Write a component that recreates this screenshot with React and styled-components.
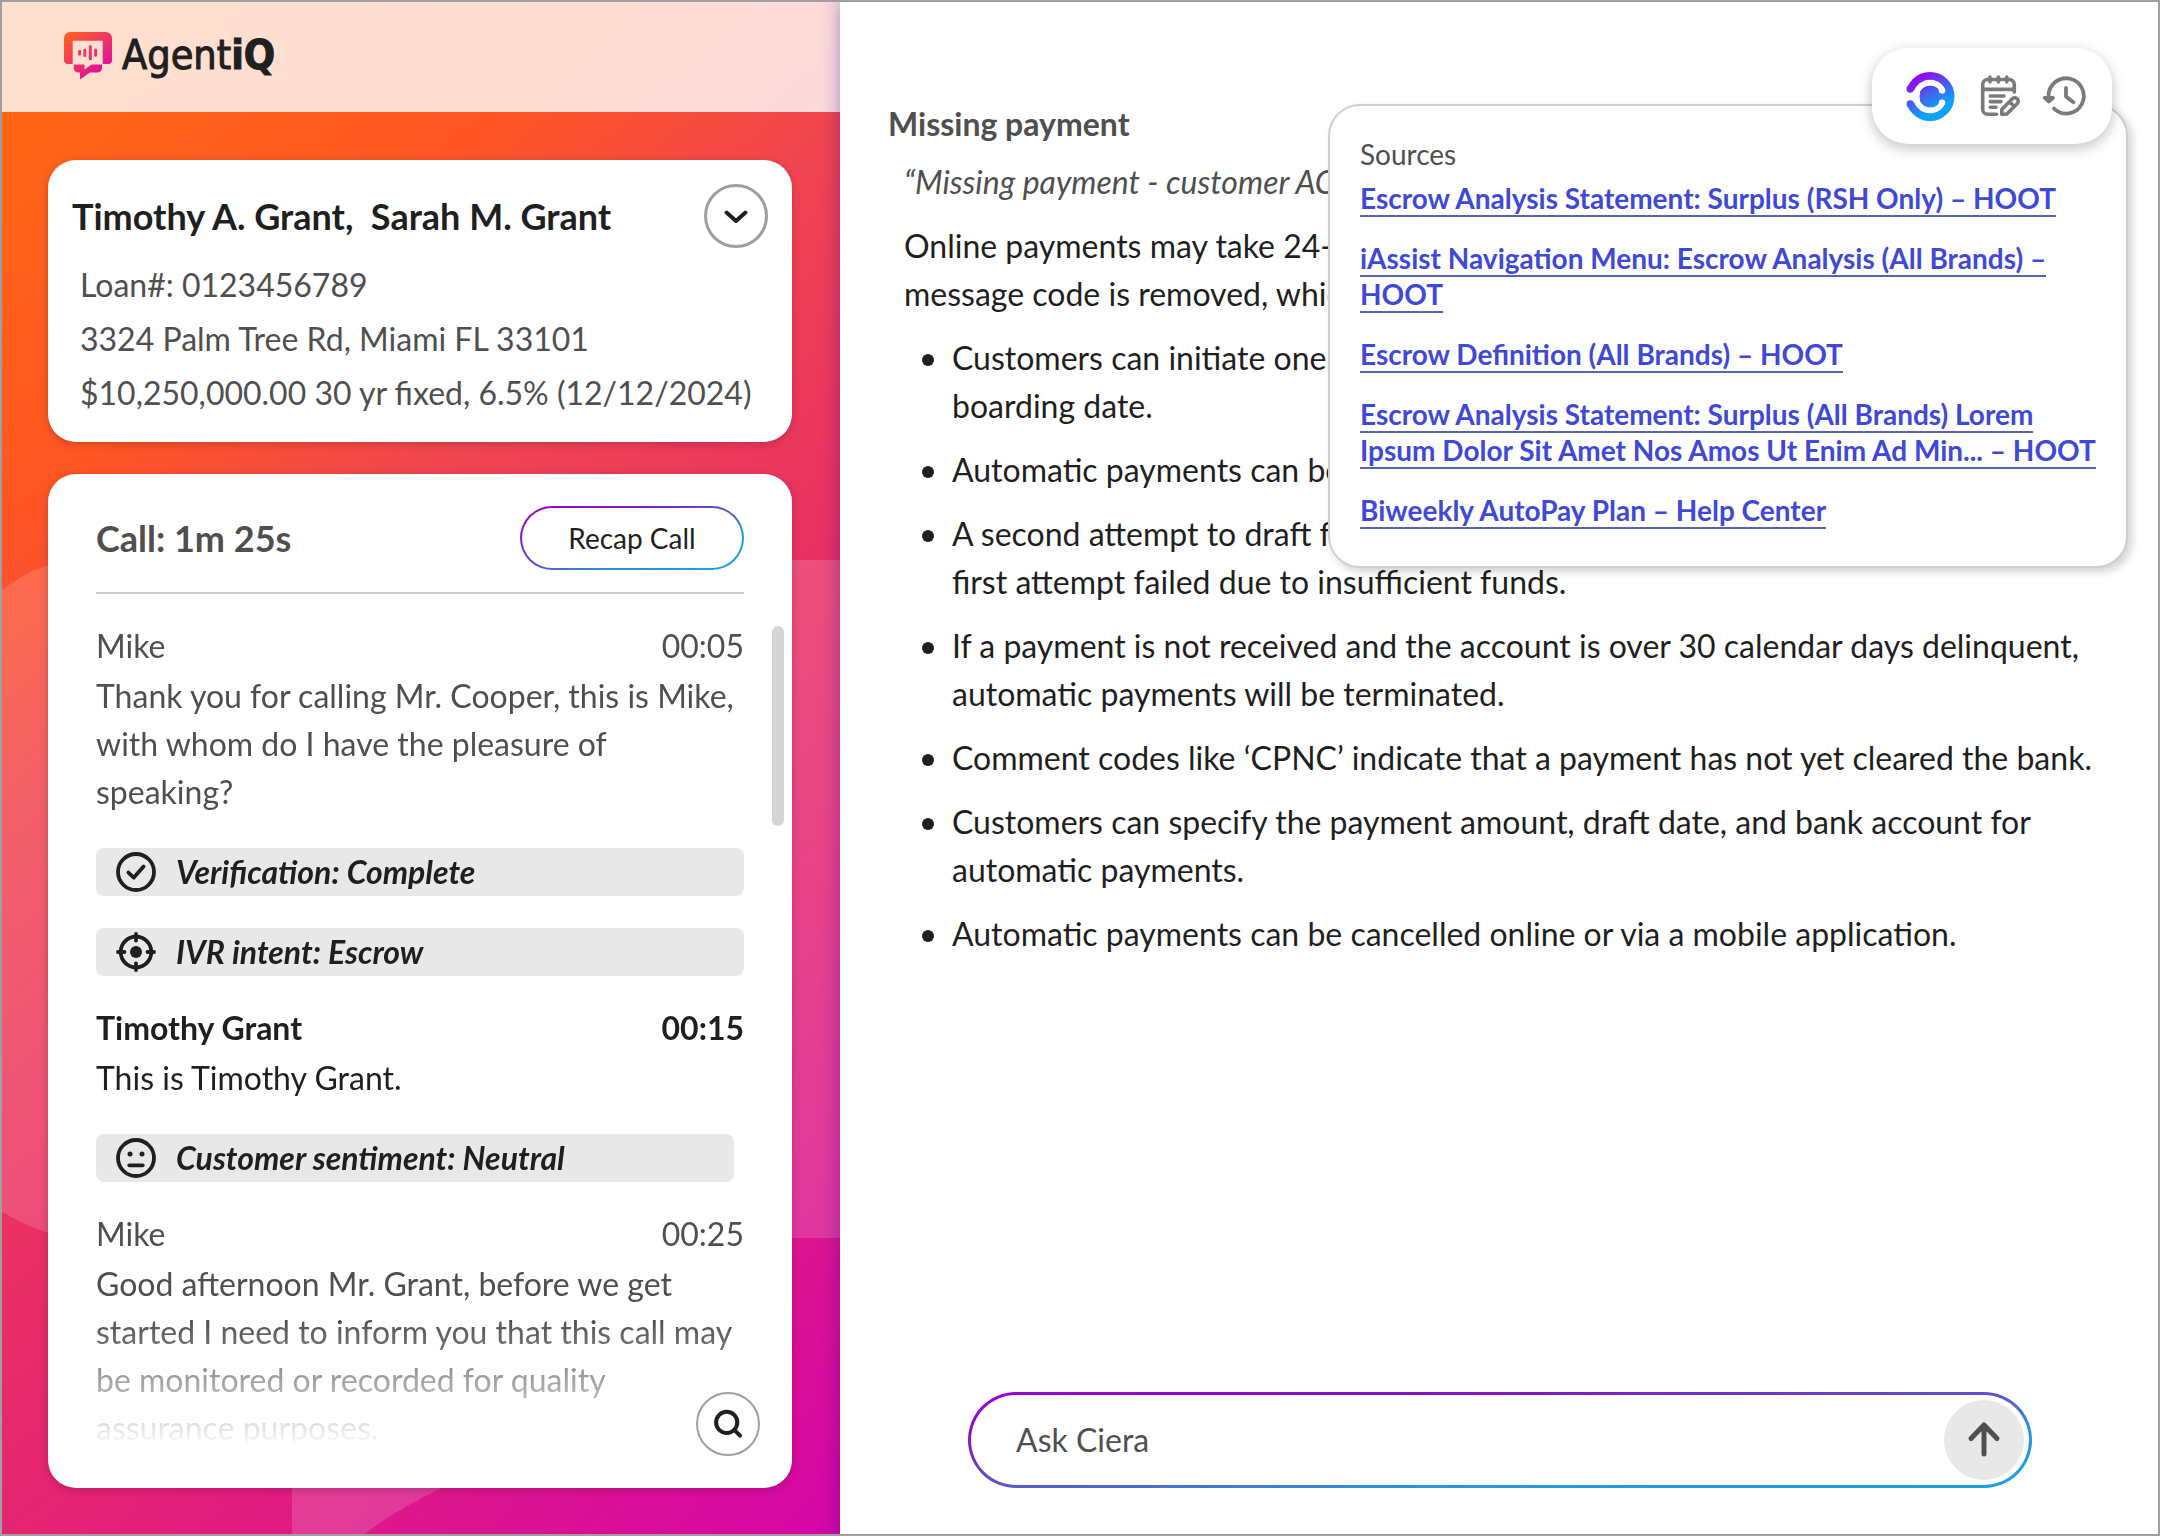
import React from "react";
import styled, { createGlobalStyle, css } from "styled-components";

const GlobalStyle = createGlobalStyle`
    :root {
        --ink: #1f1f1f;
        --gray: #4f4f4f;
        --line: #9f9f9f;
        --pill: #e8e8e8;
        --link: #3f49d8;
    }

    * {
        box-sizing: border-box;
    }

    body {
        margin: 0;
        background: #fff;
        color: var(--ink);
        font-family: Lato, "Open Sans", sans-serif;
        font-size: 32px;
        line-height: 48px;
    }

    h1, h2, p, ul {
        margin: 0;
        padding: 0;
        font-size: inherit;
    }

    ul {
        list-style: none;
    }

    button, input {
        font: inherit;
        color: inherit;
    }

    button {
        padding: 0;
        cursor: pointer;
    }

    svg {
        display: block;
        flex: none;
    }
`;

const brandBorder = css`
    border-style: solid;
    border-color: transparent;
    background:
        linear-gradient(#fff, #fff) padding-box,
        linear-gradient(to bottom right, #9a00d8, #8416c0 25%, #5a55cc 50%, #2a94d8 70%, #1aa0e6) border-box;
`;

const Page = styled.div`
    position: relative;
    display: grid;
    grid-template-columns: minmax(0, 7fr) minmax(0, 11fr);
    min-height: 100vh;

    /* frame drawn over both panels */
    &::after {
        content: "";
        position: absolute;
        inset: 0;
        z-index: 2;
        border: 2px solid var(--line);
        pointer-events: none;
    }
`;

const Sidebar = styled.aside`
    position: relative;
    display: flex;
    flex-direction: column;
    background: linear-gradient(140deg, #ff6614 5%, #ff5524 24%, #f04550 37%, #ea3163 55%, #e52472 69%, #da1392 87%, #d506a8);
`;

const Backdrop = styled.svg`
    position: absolute;
    inset: 0;
    width: 100%;
    height: 100%;
`;

const Header = styled.header`
    position: relative;
    display: flex;
    align-items: center;
    gap: 10px;
    height: 112px;
    padding: 0 64px;
    background: rgba(255, 255, 255, 0.8);
`;

const Brand = styled.span`
    padding-bottom: 2px;
    font-family: "DejaVu Sans Condensed", "Noto Sans", sans-serif;
    font-size: 41px;
    -webkit-text-stroke: 1px currentColor;

    strong {
        font-weight: 700;
    }
`;

const Cards = styled.div`
    position: relative;
    display: flex;
    flex: 1;
    flex-direction: column;
    gap: 32px;
    padding: 48px;
`;

const Card = styled.section`
    position: relative;
    border-radius: 28px;
    background: #fff;
    box-shadow: 0 2px 8px rgba(0, 0, 0, 0.2);
`;

const LoanCard = styled(Card)`
    padding: 24px 24px 22px;
`;

const LoanHead = styled.div`
    display: flex;
    align-items: center;
    justify-content: space-between;
    margin-bottom: 10px;
`;

const Names = styled.h1`
    font-size: 36px;
    font-weight: 700;
    white-space: pre;
`;

const RoundButton = styled.button`
    display: flex;
    align-items: center;
    justify-content: center;
    width: 64px;
    height: 64px;
    border: ${({ $thin }) => ($thin ? 2 : 3)}px solid var(--line);
    border-radius: 50%;
    background: #fff;
`;

const LoanLine = styled.p`
    padding-left: 8px;
    color: var(--gray);
    line-height: 54px;
`;

const CallCard = styled(Card)`
    flex: 1;
    padding: 32px 8px 36px 48px;
`;

const CallHead = styled.div`
    display: flex;
    align-items: center;
    justify-content: space-between;
    margin-right: 40px;
    padding-bottom: 22px;
    border-bottom: 2px solid #ccc;
`;

const CallTime = styled.h2`
    color: var(--gray);
    font-size: 36px;
    font-weight: 700;
`;

const RecapButton = styled.button`
    ${brandBorder}
    width: 224px;
    height: 64px;
    border-width: 2px;
    border-radius: 32px;
    font-size: 28px;
`;

const CallBody = styled.div`
    display: flex;
    gap: 28px;
`;

const Transcript = styled.div`
    flex: 1;
    min-width: 0;
    mask-image: linear-gradient(to bottom, #000 calc(100% - 132px), transparent calc(100% - 4px));
`;

const Turn = styled.div`
    padding-top: 28px;
    color: ${({ $customer }) => ($customer ? "var(--ink)" : "var(--gray)")};
`;

const TurnHead = styled.div`
    display: flex;
    justify-content: space-between;
    margin-bottom: 2px;
    font-weight: ${({ $bold }) => ($bold ? 700 : 400)};
`;

const Notes = styled.div`
    display: flex;
    flex-direction: column;
    gap: 32px;
    margin-top: 32px;
`;

const Note = styled.div`
    display: flex;
    align-items: center;
    gap: 20px;
    margin-right: ${({ $short }) => ($short ? 10 : 0)}px;
    padding-left: 20px;
    border-radius: 8px;
    background: var(--pill);
    font-style: italic;
    font-weight: 700;
`;

const ScrollRail = styled.div`
    width: 12px;
    padding-top: 32px;
`;

const ScrollThumb = styled.div`
    height: 200px;
    border-radius: 6px;
    background: #d4d6d6;
`;

const SearchButton = styled(RoundButton)`
    position: absolute;
    right: 32px;
    bottom: 32px;
`;

const Main = styled.main`
    position: relative;
    z-index: 1;
    display: flex;
    flex-direction: column;
    justify-content: space-between;
    background: #fff;
    box-shadow: 0 0 18px rgba(30, 0, 150, 0.36);
`;

const Answer = styled.article`
    padding: 100px 64px 48px 48px;
`;

const Topic = styled.h2`
    margin-bottom: 10px;
    color: var(--gray);
    font-weight: 700;
`;

const Quote = styled.p`
    padding-left: 16px;
    color: var(--gray);
    font-style: italic;
`;

const Text = styled.p`
    margin-top: 16px;
    padding-left: 16px;
`;

const Bullets = styled.ul`
    padding-left: 34px;
`;

const Bullet = styled.li`
    display: flex;
    gap: 18px;
    margin-top: 16px;

    &::before {
        content: "";
        flex: none;
        width: 12px;
        height: 12px;
        margin-top: 20px;
        border-radius: 50%;
        background: var(--ink);
    }
`;

const Sources = styled.section`
    position: absolute;
    top: 104px;
    right: 32px;
    width: 800px;
    padding: 30px 28px 38px 30px;
    border: 2px solid #d0d0d0;
    border-radius: 32px;
    background: #fff;
    box-shadow: 4px 4px 8px rgba(0, 0, 0, 0.18);
    font-size: 28px;
    line-height: 36px;
`;

const SourcesTitle = styled.h2`
    margin-bottom: 8px;
    color: var(--gray);
    font-weight: 400;
`;

const SourceList = styled.ul`
    display: flex;
    flex-direction: column;
    gap: 24px;
`;

const SourceLink = styled.a`
    border-bottom: 2px solid #5664b4;
    color: var(--link);
    font-weight: 700;
    text-decoration: none;
`;

const Toolbar = styled.nav`
    position: absolute;
    top: 48px;
    right: 48px;
    display: flex;
    align-items: center;
    gap: 20px;
    width: 240px;
    height: 96px;
    padding-left: 34px;
    border-radius: 36px;
    background: #fff;
    box-shadow: 0 4px 14px rgba(0, 0, 0, 0.25);
`;

const ToolButton = styled.button`
    border: 0;
    background: none;
    color: #7b7b7b;
`;

const Composer = styled.form`
    ${brandBorder}
    display: flex;
    align-items: center;
    height: 96px;
    margin: 0 128px 48px;
    padding: 0 5px 0 45px;
    border-width: 3px;
    border-radius: 48px;
`;

const Field = styled.input`
    flex: 1;
    min-width: 0;
    padding: 0;
    border: 0;
    outline: 0;
    background: none;

    &::placeholder {
        color: var(--gray);
        opacity: 1;
    }
`;

const SendButton = styled.button`
    width: 80px;
    height: 80px;
    border: 0;
    border-radius: 50%;
    background: var(--pill);
    color: var(--gray);
`;

const Icon = ({ size, width = 4, children }) => (
    <svg
        width={size}
        height={size}
        viewBox={`0 0 ${size} ${size}`}
        fill="none"
        stroke="currentColor"
        strokeWidth={width}
        strokeLinecap="round"
        strokeLinejoin="round"
        aria-hidden="true"
    >
        {children}
    </svg>
);

const BrandMark = () => (
    <svg width="48" height="48" viewBox="0 0 48 48" aria-hidden="true">
        <defs>
            <linearGradient id="mark" x1="0" y1="0" x2="34" y2="44" gradientUnits="userSpaceOnUse">
                <stop offset="0" stopColor="#ff6418" />
                <stop offset="0.5" stopColor="#f03c5c" />
                <stop offset="1" stopColor="#dd0aa0" />
            </linearGradient>
        </defs>
        <path
            fill="url(#mark)"
            d="M6 0H42A6 6 0 0 1 48 6V28A4 4 0 0 1 44 32H38.7V8.7H8.7V32H4A4 4 0 0 1 0 28V6A6 6 0 0 1 6 0Z"
        />
        <path
            fill="url(#mark)"
            d="M9.7 32.5H20.5V37.5L27.5 32.5H38V36A4.5 4.5 0 0 1 33.5 40.5H26L16 47.5V40.5H14.2A4.5 4.5 0 0 1 9.7 36Z"
        />
        <path
            stroke="url(#mark)"
            strokeWidth="3"
            strokeLinecap="round"
            d="M15.6 19.3V22.3M20.8 18V23.6M26.3 14.6V26.8M31.6 18V23.2"
        />
    </svg>
);

const CieraMark = () => (
    <svg width="48" height="48" viewBox="0 0 48 48" overflow="visible" aria-hidden="true">
        <defs>
            <linearGradient id="ciera" x1="10" y1="2" x2="34" y2="46" gradientUnits="userSpaceOnUse">
                <stop offset="0.05" stopColor="#9a00f5" />
                <stop offset="0.5" stopColor="#3f66ee" />
                <stop offset="0.8" stopColor="#0aa2fa" />
            </linearGradient>
            <mask id="cieraCut" maskUnits="userSpaceOnUse" x="-2" y="-2" width="52" height="52">
                <circle cx="24" cy="24.5" r="24.5" fill="#fff" />
                <path d="M24 24.5L-3 14.5V34.5Z" fill="#000" />
                <path d="M36.2 18.2A13.8 13.8 0 1 0 36.2 30.8" fill="none" stroke="#000" strokeWidth="6" strokeLinecap="round" />
                <circle cx="24.4" cy="24.5" r="10.8" fill="#fff" />
                <circle cx="36" cy="18.4" r="3.2" fill="#000" />
                <circle cx="36" cy="30.6" r="3.2" fill="#000" />
                <circle cx="4.2" cy="17" r="3.7" fill="#fff" />
                <circle cx="4.2" cy="32" r="3.7" fill="#fff" />
            </mask>
        </defs>
        <rect x="-1" y="-1" width="50" height="51" fill="url(#ciera)" mask="url(#cieraCut)" />
    </svg>
);

const NotesIcon = () => (
    <Icon size={48} width={3.6}>
        <path d="M40.3 20V12.5A5 5 0 0 0 35.3 7.5H13.7A5 5 0 0 0 8.7 12.5V37.3A5 5 0 0 0 13.7 42.3H22.5" />
        <path d="M9 17.4H40M16 5V10M24.4 5V10M32.8 5V10" />
        <path d="M16.3 24H30M16.3 29.6H27M16.3 35.3H22" />
        <path d="M27.8 42.3V37.6L38.6 26.6A3.4 3.4 0 0 1 43.4 31.4L32.5 42.3ZM35.6 29.8L40.2 34.4" />
    </Icon>
);

const HistoryIcon = () => (
    <Icon size={48} width={3.8}>
        <path d="M12 36.6A17.6 17.6 0 1 0 6.6 24.6V29M24 16V24.6L31.4 30.2" />
        <path d="M2.8 25.8H11L6.9 29.4Z" fill="currentColor" />
    </Icon>
);

const noteIcons = {
    check: (
        <Icon size={40} width={3.8}>
            <circle cx="20" cy="20" r="18" />
            <path d="M12.4 20.6L17.8 25.6L27.6 14.6" />
        </Icon>
    ),
    target: (
        <Icon size={40} width={3.8}>
            <circle cx="20" cy="20" r="15.3" />
            <circle cx="20" cy="20" r="6" fill="currentColor" stroke="none" />
            <path d="M20 2V8.5M20 31.5V38M2 20H8.5M31.5 20H38" />
        </Icon>
    ),
    neutral: (
        <Icon size={40} width={3.8}>
            <circle cx="20" cy="20" r="18" />
            <path d="M13.3 27.3H26.7" />
            <circle cx="14" cy="16" r="2.5" fill="currentColor" stroke="none" />
            <circle cx="26" cy="16" r="2.5" fill="currentColor" stroke="none" />
        </Icon>
    ),
};

const turns = [
    {
        name: "Mike",
        time: "00:05",
        text: "Thank you for calling Mr. Cooper, this is Mike, with whom do I have the pleasure of speaking?",
        notes: [
            { icon: "check", label: "Verification: Complete" },
            { icon: "target", label: "IVR intent: Escrow" },
        ],
    },
    {
        name: "Timothy Grant",
        time: "00:15",
        customer: true,
        text: "This is Timothy Grant.",
        notes: [{ icon: "neutral", label: "Customer sentiment: Neutral", short: true }],
    },
    {
        name: "Mike",
        time: "00:25",
        text: "Good afternoon Mr. Grant, before we get started I need to inform you that this call may be monitored or recorded for quality assurance purposes.",
        notes: [],
    },
];

const bullets = [
    "Customers can initiate one or more payments online within sixty days of the loan boarding date.",
    "Automatic payments can be scheduled online or by phone.",
    "A second attempt to draft funds is made on the next available business day if the first attempt failed due to insufficient funds.",
    "If a payment is not received and the account is over 30 calendar days delinquent, automatic payments will be terminated.",
    "Comment codes like ‘CPNC’ indicate that a payment has not yet cleared the bank.",
    "Customers can specify the payment amount, draft date, and bank account for automatic payments.",
    "Automatic payments can be cancelled online or via a mobile application.",
];

const sources = [
    "Escrow Analysis Statement: Surplus (RSH Only) – HOOT",
    "iAssist Navigation Menu: Escrow Analysis (All Brands) – HOOT",
    "Escrow Definition (All Brands) – HOOT",
    "Escrow Analysis Statement: Surplus (All Brands) Lorem Ipsum Dolor Sit Amet Nos Amos Ut Enim Ad Min... – HOOT",
    "Biweekly AutoPay Plan – Help Center",
];

const CallPanel = () => (
    <CallCard>
        <CallHead>
            <CallTime>Call: 1m 25s</CallTime>
            <RecapButton type="button">Recap Call</RecapButton>
        </CallHead>
        <CallBody>
            <Transcript>
                {turns.map((turn) => (
                    <React.Fragment key={turn.time}>
                        <Turn $customer={turn.customer}>
                            <TurnHead $bold={turn.customer}>
                                <span>{turn.name}</span>
                                <span>{turn.time}</span>
                            </TurnHead>
                            <p>{turn.text}</p>
                        </Turn>
                        {turn.notes.length > 0 && (
                            <Notes>
                                {turn.notes.map((note) => (
                                    <Note key={note.label} $short={note.short}>
                                        {noteIcons[note.icon]}
                                        <span>{note.label}</span>
                                    </Note>
                                ))}
                            </Notes>
                        )}
                    </React.Fragment>
                ))}
            </Transcript>
            <ScrollRail>
                <ScrollThumb />
            </ScrollRail>
        </CallBody>
        <SearchButton type="button" $thin aria-label="Search transcript">
            <Icon size={64}>
                <circle cx="30.7" cy="30.3" r="10.6" />
                <path d="M38.5 38.2L44 43.7" />
            </Icon>
        </SearchButton>
    </CallCard>
);

const App = () => {

    return (
        <Page>
            <GlobalStyle />
            <Sidebar>
                <Backdrop viewBox="0 0 840 1536" preserveAspectRatio="none" aria-hidden="true">
                    <path
                        fill="#fff"
                        fillOpacity="0.15"
                        d="M0 591C20 578 40 560 90 560H840V1238H90C50 1238 25 1225 0 1211ZM292 1238V1536H362Q395 1510 442 1488L560 1238Z"
                    />
                </Backdrop>
                <Header>
                    <BrandMark />
                    <Brand>Agent<strong>iQ</strong></Brand>
                </Header>
                <Cards>
                    <LoanCard>
                        <LoanHead>
                            <Names>{"Timothy A. Grant,  Sarah M. Grant"}</Names>
                            <RoundButton type="button" aria-label="Show loan details">
                                <Icon size={64}>
                                    <path d="M22.5 28.5L32 37L41.5 28.5" />
                                </Icon>
                            </RoundButton>
                        </LoanHead>
                        <LoanLine>Loan#: 0123456789</LoanLine>
                        <LoanLine>3324 Palm Tree Rd, Miami FL 33101</LoanLine>
                        <LoanLine>$10,250,000.00 30 yr fixed, 6.5% (12/12/2024)</LoanLine>
                    </LoanCard>
                    <CallPanel />
                </Cards>
            </Sidebar>
            <Main>
                <Answer>
                    <Topic>Missing payment</Topic>
                    <Quote>“Missing payment - customer ACH payment”</Quote>
                    <Text>
                        Online payments may take 24-48 hours to post to the account. Once posted, the
                        message code is removed, which is expected.
                    </Text>
                    <Bullets>
                        {bullets.map((text) => (
                            <Bullet key={text}>
                                <span>{text}</span>
                            </Bullet>
                        ))}
                    </Bullets>
                </Answer>
                <Sources>
                    <SourcesTitle>Sources</SourcesTitle>
                    <SourceList>
                        {sources.map((title) => (
                            <li key={title}>
                                <SourceLink href="#">{title}</SourceLink>
                            </li>
                        ))}
                    </SourceList>
                </Sources>
                <Toolbar aria-label="Tools">
                    <ToolButton type="button" aria-label="Ciera">
                        <CieraMark />
                    </ToolButton>
                    <ToolButton type="button" aria-label="Notes">
                        <NotesIcon />
                    </ToolButton>
                    <ToolButton type="button" aria-label="History">
                        <HistoryIcon />
                    </ToolButton>
                </Toolbar>
                <Composer>
                    <Field type="text" placeholder="Ask Ciera" aria-label="Ask Ciera" />
                    <SendButton type="submit" aria-label="Send">
                        <Icon size={80} width={5}>
                            <path d="M40 54V25M27 38.5L40 25L53 38.5" />
                        </Icon>
                    </SendButton>
                </Composer>
            </Main>
        </Page>
    )
};

export default App;
